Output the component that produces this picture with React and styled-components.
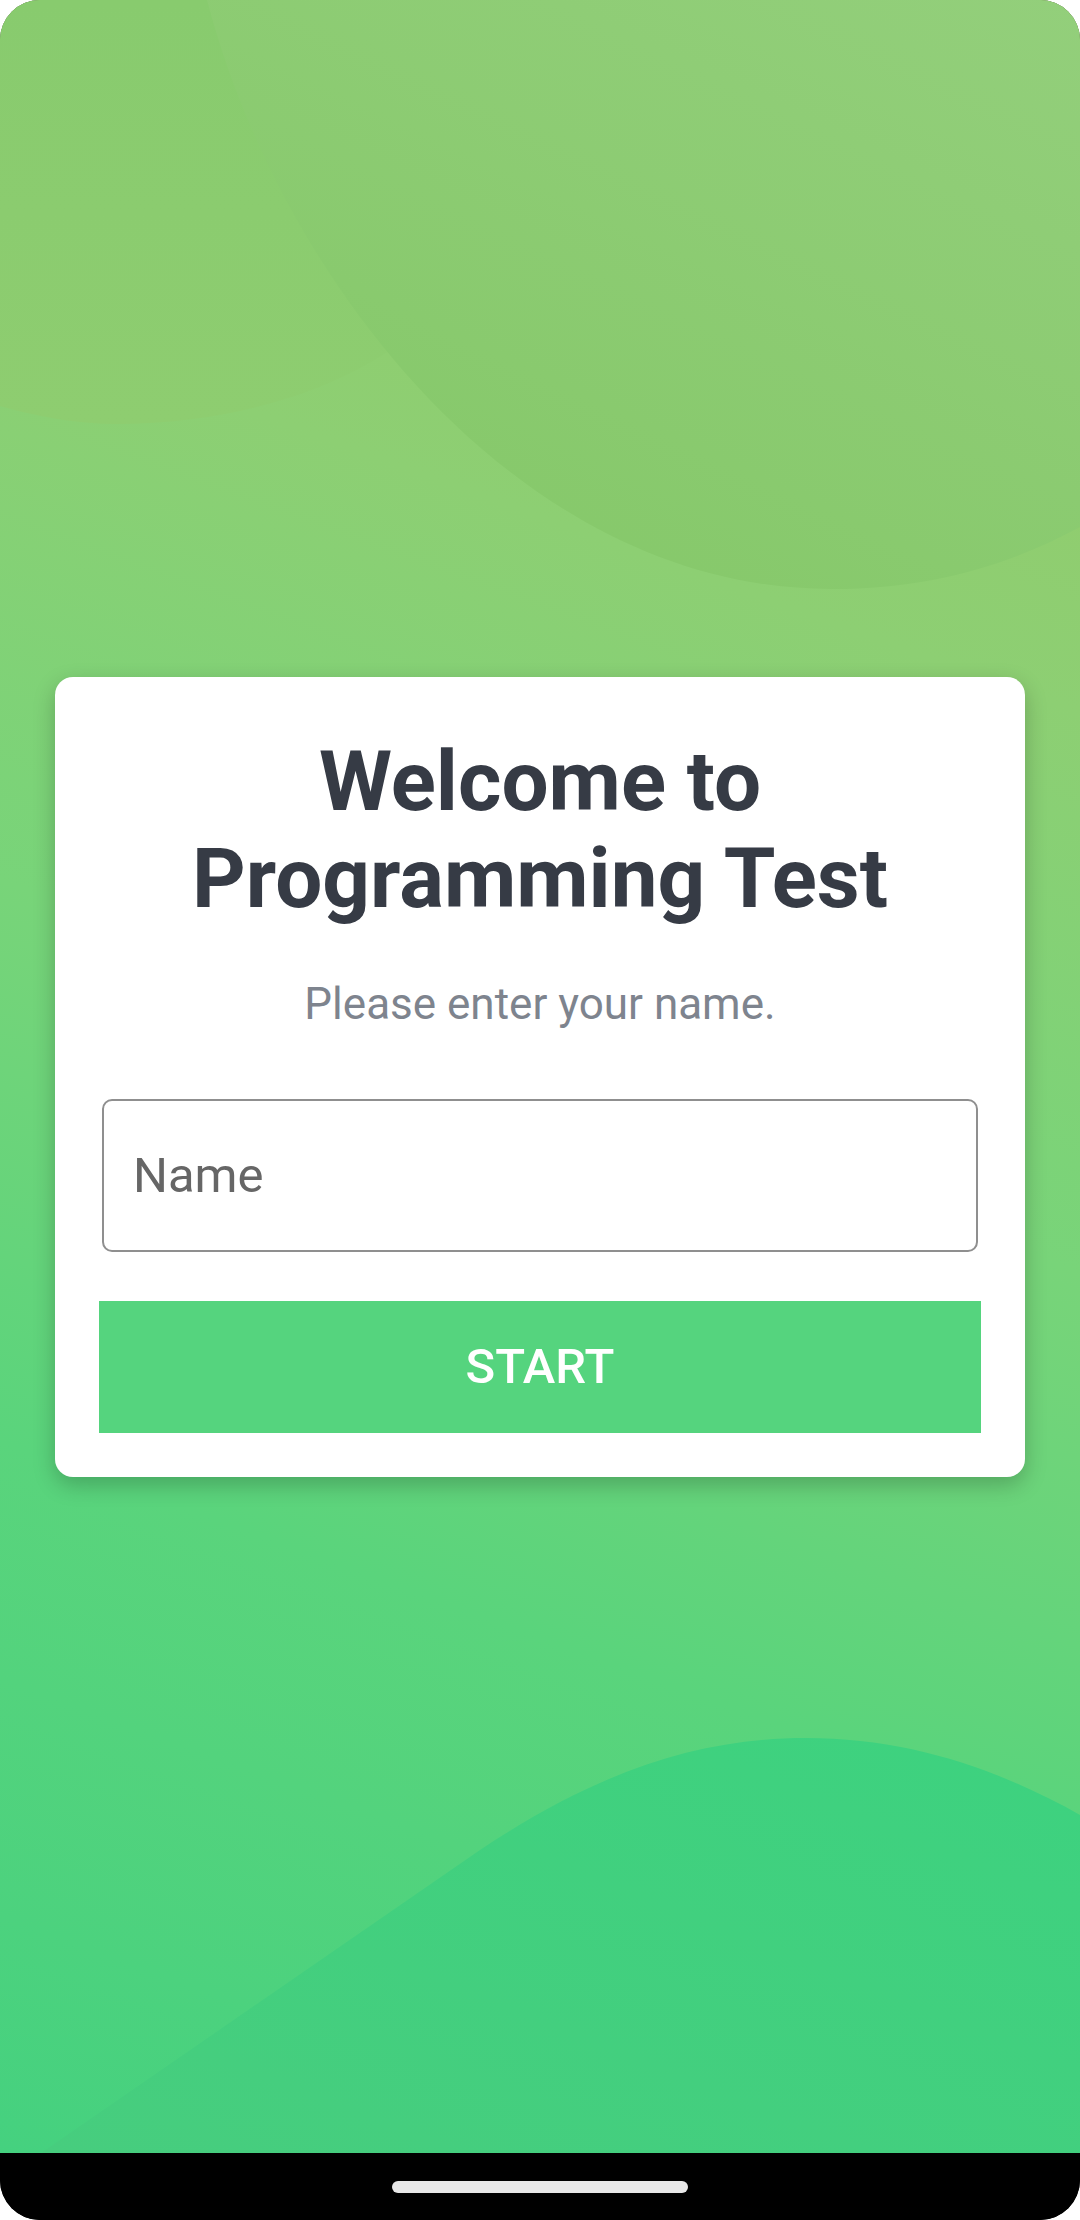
import styled, { createGlobalStyle } from "styled-components";

const GlobalStyle = createGlobalStyle`
  html, body {
    margin: 0;
    padding: 0;
    background: #ffffff;
  }
  * {
    box-sizing: border-box;
  }
`;

const Phone = styled.div`
  width: 1080px;
  height: 2220px;
  display: flex;
  flex-direction: column;
  border-radius: 40px;
  overflow: hidden;
  background: #000;
  font-family: Roboto, "Noto Sans", "Liberation Sans", sans-serif;
`;

const Screen = styled.main`
  flex: 1;
  position: relative;
  display: flex;
  align-items: center;
  justify-content: center;
  padding: 0 55px;
  background: linear-gradient(200deg, #97c866 0%, #8dcf73 28%, #78d479 50%, #5ad47c 72%, #45d17f 100%);
`;

const Backdrop = styled.svg`
  position: absolute;
  inset: 0;
  width: 100%;
  height: 100%;
`;

const Card = styled.section`
  position: relative;
  width: 100%;
  display: flex;
  flex-direction: column;
  padding: 56px 44px 44px;
  background: #ffffff;
  border-radius: 18px;
  box-shadow: 0 8px 22px rgba(0, 0, 0, 0.22);
`;

const Title = styled.h1`
  margin: 0;
  font-size: 83.5px;
  line-height: 97px;
  font-weight: 700;
  color: #363b45;
  text-align: center;
`;

const Subtitle = styled.p`
  margin: 53px 0 0;
  font-size: 44px;
  line-height: 49px;
  color: #7e848e;
  text-align: center;
`;

const NameInput = styled.input`
  margin: 70px 3px 0;
  height: 153px;
  padding: 0 29px;
  border: 2px solid #8f8f8f;
  border-radius: 10px;
  font-family: inherit;
  font-size: 49px;
  color: #333;
  outline: none;

  &::placeholder {
    color: #666666;
  }
`;

const StartButton = styled.button`
  margin-top: 49px;
  height: 132px;
  border: none;
  background: #55d47e;
  color: #ffffff;
  font-family: inherit;
  font-size: 49px;
  font-weight: 500;
  text-transform: uppercase;
`;

const NavBar = styled.div`
  height: 67px;
  display: flex;
  align-items: center;
  justify-content: center;
  background: #000;
`;

const Handle = styled.span`
  width: 296px;
  height: 12px;
  border-radius: 6px;
  background: #e8e8e8;
`;

function Blobs() {
  return (
    <Backdrop viewBox="0 0 1080 2153" preserveAspectRatio="none">
      <defs>
        <linearGradient id="bigBlob" x1="1" y1="0" x2="0.3" y2="1">
          <stop offset="0" stopColor="#93cf7b" />
          <stop offset="1" stopColor="#85c869" />
        </linearGradient>
        <linearGradient id="leftBlob" x1="0" y1="0" x2="0" y2="1">
          <stop offset="0" stopColor="#88cb6e" />
          <stop offset="1" stopColor="#8ecd70" />
        </linearGradient>
        <linearGradient id="lowBlob" x1="1" y1="0" x2="0" y2="1">
          <stop offset="0" stopColor="#3dd27f" />
          <stop offset="1" stopColor="#47cd7e" />
        </linearGradient>
      </defs>
      <path d="M0,0 H212 C250,140 320,280 393,348 C330,392 230,424 117,424 C75,424 35,416 0,406 Z" fill="url(#leftBlob)" />
      <path d="M207,0 C280,280 520,590 833,589 C930,589 1010,565 1080,527 V0 Z" fill="url(#bigBlob)" />
      <path d="M41,2153 L480,1850 C600,1770 700,1738 806,1738 C910,1738 1000,1770 1080,1815 V2153 Z" fill="url(#lowBlob)" />
    </Backdrop>
  );
}

export default function App() {
  return (
    <>
      <GlobalStyle />
      <Phone>
        <Screen>
          <Blobs />
          <Card>
            <Title>
              Welcome to
              <br />
              Programming Test
            </Title>
            <Subtitle>Please enter your name.</Subtitle>
            <NameInput type="text" placeholder="Name" />
            <StartButton type="button">Start</StartButton>
          </Card>
        </Screen>
        <NavBar>
          <Handle />
        </NavBar>
      </Phone>
    </>
  );
}
